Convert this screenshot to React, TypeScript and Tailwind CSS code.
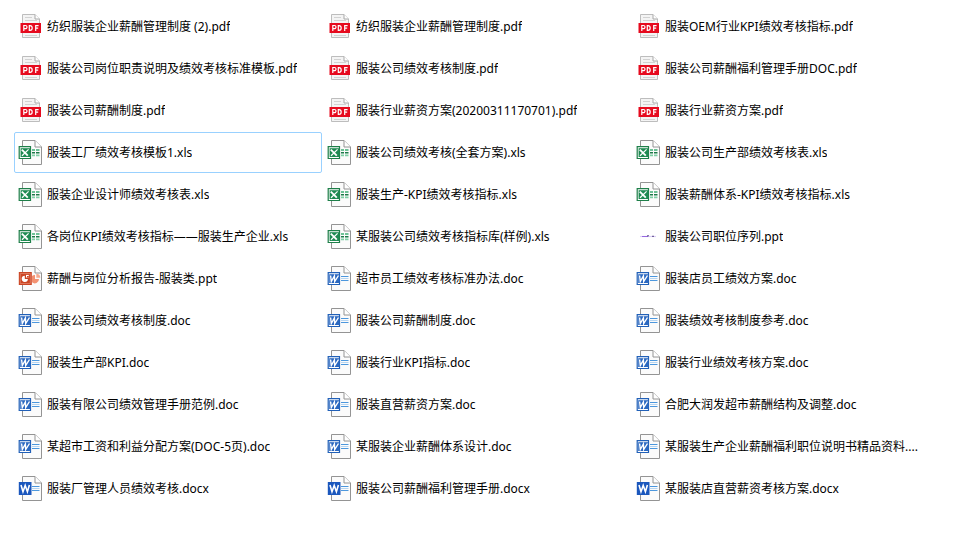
import { useState } from 'react';

type FileKind = 'pdf' | 'xls' | 'ppt' | 'doc' | 'docx' | 'slide';

interface FileEntry {
  name: string;
  kind: FileKind;
}

// Listed left to right, top to bottom
const FILES: FileEntry[] = [
  { name: '纺织服装企业薪酬管理制度 (2).pdf', kind: 'pdf' },
  { name: '纺织服装企业薪酬管理制度.pdf', kind: 'pdf' },
  { name: '服装OEM行业KPI绩效考核指标.pdf', kind: 'pdf' },
  { name: '服装公司岗位职责说明及绩效考核标准模板.pdf', kind: 'pdf' },
  { name: '服装公司绩效考核制度.pdf', kind: 'pdf' },
  { name: '服装公司薪酬福利管理手册DOC.pdf', kind: 'pdf' },
  { name: '服装公司薪酬制度.pdf', kind: 'pdf' },
  { name: '服装行业薪资方案(20200311170701).pdf', kind: 'pdf' },
  { name: '服装行业薪资方案.pdf', kind: 'pdf' },
  { name: '服装工厂绩效考核模板1.xls', kind: 'xls' },
  { name: '服装公司绩效考核(全套方案).xls', kind: 'xls' },
  { name: '服装公司生产部绩效考核表.xls', kind: 'xls' },
  { name: '服装企业设计师绩效考核表.xls', kind: 'xls' },
  { name: '服装生产-KPI绩效考核指标.xls', kind: 'xls' },
  { name: '服装薪酬体系-KPI绩效考核指标.xls', kind: 'xls' },
  { name: '各岗位KPI绩效考核指标——服装生产企业.xls', kind: 'xls' },
  { name: '某服装公司绩效考核指标库(样例).xls', kind: 'xls' },
  { name: '服装公司职位序列.ppt', kind: 'slide' },
  { name: '薪酬与岗位分析报告-服装类.ppt', kind: 'ppt' },
  { name: '超市员工绩效考核标准办法.doc', kind: 'doc' },
  { name: '服装店员工绩效方案.doc', kind: 'doc' },
  { name: '服装公司绩效考核制度.doc', kind: 'doc' },
  { name: '服装公司薪酬制度.doc', kind: 'doc' },
  { name: '服装绩效考核制度参考.doc', kind: 'doc' },
  { name: '服装生产部KPI.doc', kind: 'doc' },
  { name: '服装行业KPI指标.doc', kind: 'doc' },
  { name: '服装行业绩效考核方案.doc', kind: 'doc' },
  { name: '服装有限公司绩效管理手册范例.doc', kind: 'doc' },
  { name: '服装直营薪资方案.doc', kind: 'doc' },
  { name: '合肥大润发超市薪酬结构及调整.doc', kind: 'doc' },
  { name: '某超市工资和利益分配方案(DOC-5页).doc', kind: 'doc' },
  { name: '某服装企业薪酬体系设计.doc', kind: 'doc' },
  { name: '某服装生产企业薪酬福利职位说明书精品资料....', kind: 'doc' },
  { name: '服装厂管理人员绩效考核.docx', kind: 'docx' },
  { name: '服装公司薪酬福利管理手册.docx', kind: 'docx' },
  { name: '某服装店直营薪资考核方案.docx', kind: 'docx' },
];

function Page() {
  return (
    <>
      <path d="M4.5.5H17L23.5 7V24.5H4.5Z" fill="#fbfbfb" stroke="#949494" />
      <path d="M17 .5V7H23.5" fill="#fff" stroke="#949494" />
    </>
  );
}

function PdfArt() {
  return (
    <>
      <path d="M4.5.5H17L21.5 5V23.5H4.5Z" fill="#f4f4f4" stroke="#bdbdbd" />
      <path d="M17 .5V5H21.5" fill="#fff" stroke="#a8a8a8" />
      <path d="M7 3.5H14M7 6.5H19M7 21.5H19" stroke="#d2d2d2" />
      <path d="M2.5 9H23V19H2.5Z" fill="#e60a1e" />
      <path
        d="M5.8 17V11.5H7.4A1.5 1.5 0 0 1 7.4 14.7H5.8M11.3 11.6V16.4H12A2.2 2.4 0 0 0 12 11.6ZM17.7 17V11.6H20.6M17.7 14.2H20.2"
        fill="none"
        stroke="#fff"
        strokeWidth="1.2"
      />
    </>
  );
}

function XlsArt() {
  return (
    <>
      <Page />
      <path d="M14 10H17M18 10H21.5" stroke="#3fae76" strokeWidth="1.6" />
      <path d="M14 12.7H17M18 12.7H21.5" stroke="#1b7a48" strokeWidth="1.6" />
      <path d="M14 15.4H17M18 15.4H21.5" stroke="#7fd0a6" strokeWidth="1.6" />
      <path d="M1.2 6.7H12.5V18.5H1.2Z" fill="#fff" stroke="#1e7f49" strokeWidth="1.2" />
      <path d="M2.6 8.2H12.5V17H2.6Z" fill="#1e8a52" />
      <path d="M3.8 9.6L9.8 15.6" stroke="#fff" strokeWidth="1.9" />
      <path d="M10.6 9.4L4 15.8" stroke="#fff" strokeWidth="1.2" />
    </>
  );
}

function PptArt() {
  return (
    <>
      <Page />
      <path d="M17 9A4.2 4.2 0 0 0 14 10V16.3A4.2 4.2 0 0 0 21 13H17Z" fill="#f39272" />
      <path d="M18.3 7.8A4.2 4.2 0 0 1 22.3 11.8H18.3Z" fill="#f6ab91" />
      <path d="M.8 6H13.8V19H.8Z" fill="#cb4524" />
      <path d="M2.3 7.5H12.3V17.5H2.3Z" fill="none" stroke="#e58d74" strokeWidth=".7" />
      <path d="M6.8 9.7A3.1 3.1 0 1 0 9.9 12.9H6.8Z" fill="#fff" />
      <path d="M8 8.9H10.8V11.6H8Z" fill="#fff" />
      <path d="M9 10H10.8V11.6H9Z" fill="#cb4524" />
    </>
  );
}

function WordLines() {
  return (
    <>
      <path d="M14 10.5H21.5M14 14.5H21.5" stroke="#4c97dd" strokeWidth="1.2" />
      <path d="M14 12.5H21.5" stroke="#b5d5f2" />
    </>
  );
}

function DocArt() {
  return (
    <>
      <Page />
      <WordLines />
      <path d="M1.2 6.7H12.5V18.5H1.2Z" fill="#fff" stroke="#2160b8" strokeWidth="1.2" />
      <path d="M2.2 8.2H12.5V17H2.2Z" fill="#2b68c0" />
      <path d="M3.6 9.5L4.3 15.6L7.4 10L7.7 15.6L11.5 9.5" fill="none" stroke="#fff" strokeWidth="1.4" />
    </>
  );
}

function DocxArt() {
  return (
    <>
      <Page />
      <WordLines />
      <path d="M.8 6H13.5V19H.8Z" fill="#1b57bd" />
      <path d="M3 9L5 15.7L7.2 9.5L9.4 15.7L11.4 9" fill="none" stroke="#fff" strokeWidth="1.6" />
    </>
  );
}

// Thumbnail of an almost empty slide
function SlideArt() {
  return (
    <>
      <path d="M4 12.5H20" stroke="#dccff7" strokeWidth="1.2" />
      <path d="M6 12.5H12" stroke="#9668e0" />
      <path d="M11 11.8H13M16 12.3H18" stroke="#4b3a78" strokeWidth=".9" />
    </>
  );
}

const ART: Record<FileKind, () => React.JSX.Element> = {
  pdf: PdfArt,
  xls: XlsArt,
  ppt: PptArt,
  doc: DocArt,
  docx: DocxArt,
  slide: SlideArt,
};

function FileIcon({ kind }: { kind: FileKind }) {
  const Art = ART[kind];
  return (
    <svg width="24" height="25" viewBox="0 0 24 25" className="shrink-0" aria-hidden="true">
      <Art />
    </svg>
  );
}

export default function App() {
  const [focused, setFocused] = useState('服装工厂绩效考核模板1.xls');

  return (
    <main className="min-h-screen bg-white pt-1.5 pr-4 pl-3.5 font-['Noto_Sans','Noto_Sans_CJK_SC',sans-serif] text-xs text-black">
      <ul className="grid grid-cols-3 gap-px">
        {FILES.map((file) => (
          <li key={file.name}>
            <button
              type="button"
              onClick={() => setFocused(file.name)}
              className={`flex h-[41px] w-full items-center gap-[5px] rounded-xs border pr-1 pl-[3px] text-left outline-none ${
                focused === file.name ? 'border-[#99d1ff]' : 'border-transparent hover:bg-[#e5f3ff]'
              }`}
            >
              <FileIcon kind={file.kind} />
              <span className="truncate">{file.name}</span>
            </button>
          </li>
        ))}
      </ul>
    </main>
  );
}
